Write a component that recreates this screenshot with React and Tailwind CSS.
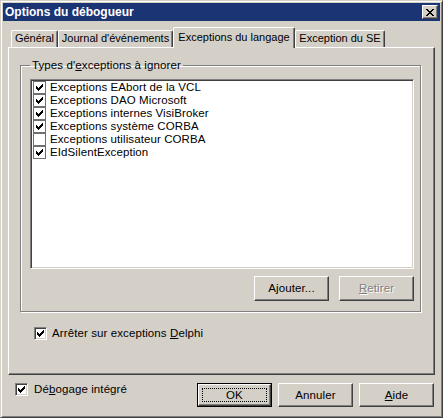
import React from "react";

// Classic Win2000 bevels, written out so Tailwind can see every class.
const raised =
    "border border-t-white border-l-white border-r-[#404040] border-b-[#404040] shadow-[inset_-1px_-1px_0_#808080]";
const sunken =
    "border border-t-[#808080] border-l-[#808080] border-r-white border-b-white shadow-[inset_1px_1px_0_#404040,inset_-1px_-1px_0_#d4d0c8]";

const exceptions = [
    { label: "Exceptions EAbort de la VCL", checked: true },
    { label: "Exceptions DAO Microsoft", checked: true },
    { label: "Exceptions internes VisiBroker", checked: true },
    { label: "Exceptions système CORBA", checked: true },
    { label: "Exceptions utilisateur CORBA", checked: false },
    { label: "EIdSilentException", checked: true },
];

const tabs = [
    { label: "Général", width: "w-[47px]" },
    { label: "Journal d'événements", width: "w-[115px]" },
    { label: "Exceptions du langage", width: "w-[122px]", active: true },
    { label: "Exception du SE", width: "w-[90px]" },
];

const CheckMark = () => (
    <svg width="7" height="7" viewBox="0 0 7 7" shapeRendering="crispEdges">
        <path
            fill="#000"
            d="M6 0h1v1h-1z M5 1h2v1h-2z M0 2h1v1h-1z M4 2h3v1h-3z M0 3h2v1h-2z M3 3h3v1h-3z M0 4h5v1h-5z M1 5h3v1h-3z M2 6h1v1h-1z"
        />
    </svg>
);

const CloseGlyph = () => (
    <svg width="8" height="7" viewBox="0 0 8 7" shapeRendering="crispEdges">
        <path
            fill="#000"
            d="M0 0h2v1H0z M6 0h2v1H6z M1 1h2v1H1z M5 1h2v1H5z M2 2h4v1H2z M3 3h2v1H3z M2 4h4v1H2z M1 5h2v1H1z M5 5h2v1H5z M0 6h2v1H0z M6 6h2v1H6z"
        />
    </svg>
);

const Check3D = ({ checked }) => (
    <div className={`flex h-[13px] w-[13px] shrink-0 items-center justify-center bg-white ${sunken}`}>
        {checked && <CheckMark />}
    </div>
);

const CheckFlat = ({ checked }) => (
    <div className="flex h-[13px] w-[13px] shrink-0 items-center justify-center border border-[#707070] bg-white">
        {checked && <CheckMark />}
    </div>
);

const Button = ({ children, className = "", disabled }) => (
    <div
        className={`flex items-center justify-center bg-[#d4d0c8] ${raised} ${
            disabled ? "text-[#808080] [text-shadow:1px_1px_0_#fff]" : "text-black"
        } ${className}`}
    >
        {children}
    </div>
);

const App = () => {
    return (
        <div
            className="box-border h-[418px] w-[443px] border border-t-[#d4d0c8] border-l-[#d4d0c8] border-r-[#404040] border-b-[#404040] bg-[#d4d0c8] p-[2px] text-[11.5px] leading-[13px] tracking-[0.1px] text-black shadow-[inset_1px_1px_0_#fff,inset_-1px_-1px_0_#808080]"
            style={{ fontFamily: '"Liberation Sans", Arial, sans-serif' }}
        >
            {/* title bar */}
            <div className="flex h-[18px] items-center justify-between bg-[#1b3474] pl-[2px] pr-[2px]">
                <span className="text-[12px] font-bold tracking-normal text-white">Options du débogueur</span>
                <div className={`flex h-[14px] w-[16px] items-center justify-center bg-[#d4d0c8] ${raised}`}>
                    <CloseGlyph />
                </div>
            </div>

            {/* tab control */}
            <div className="mt-[6px] px-[5px]">
                <div className="relative z-10 flex h-[20px] items-end whitespace-nowrap pl-[3px] text-[11px] tracking-normal">
                    {tabs.map((tab) =>
                        tab.active ? (
                            <div
                                key={tab.label}
                                className={`-mb-px flex h-[21px] ${tab.width} shrink-0 items-center justify-center rounded-t-[2px] border-t border-l border-r border-t-white border-l-white border-r-[#404040] bg-[#d4d0c8] pb-[2px] shadow-[inset_-1px_0_0_#808080]`}
                            >
                                {tab.label}
                            </div>
                        ) : (
                            <div
                                key={tab.label}
                                className={`flex h-[17px] ${tab.width} shrink-0 items-center justify-center rounded-t-[2px] border-t border-l border-r border-t-white border-l-white border-r-[#404040] pb-[1px] shadow-[inset_-1px_0_0_#808080]`}
                            >
                                {tab.label}
                            </div>
                        )
                    )}
                </div>

                <div className={`h-[328px] ${raised}`}>
                    <fieldset className="ml-[11px] mt-[11px] w-[401px] border border-[#808080] pb-[10px] pl-[9px] pr-[6px] pt-[7px] shadow-[inset_1px_1px_0_#fff,1px_1px_0_#fff]">
                        <legend className="px-[2px]">
                            Types d'<span className="underline">e</span>xceptions à ignorer
                        </legend>
                        <div className={`h-[190px] bg-white p-px ${sunken}`}>
                            {exceptions.map((item) => (
                                <div key={item.label} className="flex h-[13px] items-center gap-[4px] pl-px">
                                    <CheckFlat checked={item.checked} />
                                    <span>{item.label}</span>
                                </div>
                            ))}
                        </div>
                        <div className="mt-[7px] flex justify-end gap-[10px]">
                            <Button className="h-[25px] w-[75px]">Ajouter...</Button>
                            <Button className="h-[25px] w-[75px]" disabled>
                                <span className="underline">R</span>etirer
                            </Button>
                        </div>
                    </fieldset>

                    <div className="ml-[25px] mt-[15px] flex items-center gap-[5px]">
                        <Check3D checked />
                        <span>
                            Arrêter sur exceptions <span className="underline">D</span>elphi
                        </span>
                    </div>
                </div>
            </div>

            {/* bottom row */}
            <div className="mt-[8px] flex items-start justify-between pl-[12px] pr-[6px]">
                <div className="flex items-center gap-[6px]">
                    <Check3D checked />
                    <span>
                        Dé<span className="underline">b</span>ogage intégré
                    </span>
                </div>
                <div className="flex gap-[6px]">
                    <div className="h-[24px] w-[75px] border border-black">
                        <div className={`flex h-full w-full items-center justify-center bg-[#d4d0c8] p-[3px] ${raised}`}>
                            <div className="flex h-full w-full items-center justify-center border border-dotted border-black">
                                OK
                            </div>
                        </div>
                    </div>
                    <Button className="h-[24px] w-[75px]">Annuler</Button>
                    <Button className="h-[24px] w-[75px]">
                        <span className="underline">A</span>ide
                    </Button>
                </div>
            </div>
        </div>
    );
};

export default App;
